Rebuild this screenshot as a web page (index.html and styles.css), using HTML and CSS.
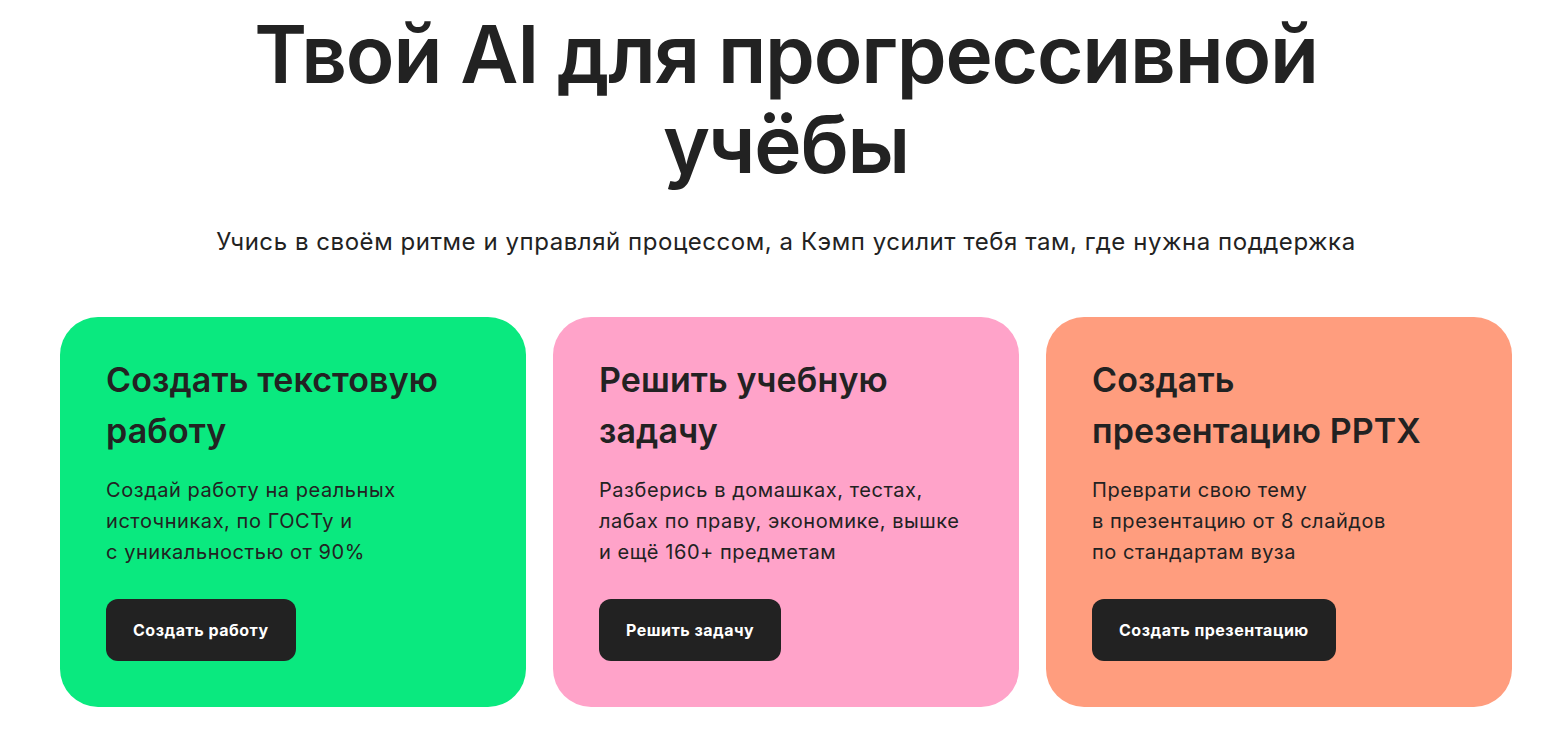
FILE: index.html
```html
<!DOCTYPE html>
<html lang="ru">
<head>
<meta charset="utf-8">
<title>Кэмп</title>
<link rel="stylesheet" href="styles.css">
</head>
<body>
<main class="page">
  <h1 class="hero-title">Твой AI для прогрессивной<br>учёбы</h1>
  <p class="hero-sub">Учись в своём ритме и управляй процессом, а Кэмп усилит тебя там, где нужна поддержка</p>
  <section class="cards">
    <article class="card card-green">
      <h2 class="card-title">Создать текстовую<br>работу</h2>
      <p class="card-text">Создай работу на реальных<br>источниках, по ГОСТу и<br>с уникальностью от 90%</p>
      <a class="card-btn" href="#">Создать работу</a>
    </article>
    <article class="card card-pink">
      <h2 class="card-title">Решить учебную<br>задачу</h2>
      <p class="card-text">Разберись в домашках, тестах,<br>лабах по праву, экономике, вышке<br>и ещё 160+ предметам</p>
      <a class="card-btn" href="#">Решить задачу</a>
    </article>
    <article class="card card-orange">
      <h2 class="card-title">Создать<br>презентацию PPTX</h2>
      <p class="card-text">Преврати свою тему<br>в презентацию от 8 слайдов<br>по стандартам вуза</p>
      <a class="card-btn" href="#">Создать презентацию</a>
    </article>
  </section>
</main>
</body>
</html>
```
FILE: styles.css
```css
* { box-sizing: border-box; }
html, body { margin: 0; padding: 0; background: #fff; }
body {
  font-family: "Inter", "Roboto", "Liberation Sans", sans-serif;
  color: #222;
}
.page {
  padding: 9px 48px 0 60px;
  display: flex;
  flex-direction: column;
  align-items: center;
}
.hero-title {
  margin: 0;
  font-size: 80px;
  line-height: 90px;
  font-weight: 600;
  letter-spacing: -1.2px;
  text-align: center;
  color: #222;
}
.hero-sub {
  margin: 38px 0 0;
  font-size: 24px;
  line-height: 30px;
  font-weight: 400;
  letter-spacing: 0.55px;
  text-align: center;
  color: #222;
}
.cards {
  margin-top: 60px;
  width: 100%;
  display: grid;
  grid-template-columns: repeat(3, 1fr);
  gap: 27px;
}
.card {
  height: 390px;
  border-radius: 38px;
  padding: 37px 46px 46px;
  display: flex;
  flex-direction: column;
  align-items: flex-start;
}
.card-green { background: #0ae97f; }
.card-pink { background: #ffa3c9; }
.card-orange { background: #ff9d7e; }
.card-title {
  margin: 0;
  font-size: 34px;
  line-height: 51px;
  font-weight: 600;
  letter-spacing: 0.1px;
  color: #222;
}
.card-text {
  margin: 19px 0 0;
  font-size: 20px;
  line-height: 31px;
  font-weight: 400;
  letter-spacing: 0.55px;
  color: #222;
}
.card-btn {
  margin-top: auto;
  display: inline-flex;
  align-items: center;
  justify-content: center;
  height: 62px;
  padding: 0 27px;
  border-radius: 12px;
  background: #222;
  color: #fff;
  font-size: 16px;
  font-weight: 700;
  letter-spacing: 0.5px;
  text-decoration: none;
}
```
